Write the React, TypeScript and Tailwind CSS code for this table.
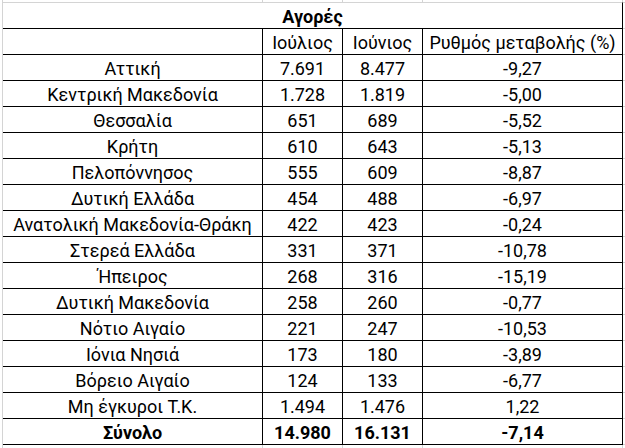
import React from "react";

const rows: [string, string, string, string][] = [
  ["Αττική", "7.691", "8.477", "-9,27"],
  ["Κεντρική Μακεδονία", "1.728", "1.819", "-5,00"],
  ["Θεσσαλία", "651", "689", "-5,52"],
  ["Κρήτη", "610", "643", "-5,13"],
  ["Πελοπόννησος", "555", "609", "-8,87"],
  ["Δυτική Ελλάδα", "454", "488", "-6,97"],
  ["Ανατολική Μακεδονία-Θράκη", "422", "423", "-0,24"],
  ["Στερεά Ελλάδα", "331", "371", "-10,78"],
  ["Ήπειρος", "268", "316", "-15,19"],
  ["Δυτική Μακεδονία", "258", "260", "-0,77"],
  ["Νότιο Αιγαίο", "221", "247", "-10,53"],
  ["Ιόνια Νησιά", "173", "180", "-3,89"],
  ["Βόρειο Αιγαίο", "124", "133", "-6,77"],
  ["Μη έγκυροι Τ.Κ.", "1.494", "1.476", "1,22"],
];

function Cell({ w, children, bold }: { w: string; children?: React.ReactNode; bold?: boolean }) {
  return (
    <div
      className={`${w} h-[26px] border-r border-b border-black flex items-start justify-center pt-[3px] leading-[22px] whitespace-nowrap ${bold ? "font-bold" : ""}`}
    >
      {children}
    </div>
  );
}

function Row({ cells, bold }: { cells: string[]; bold?: boolean }) {
  return (
    <div className="flex">
      <div className="w-[2px] h-[26px]" />
      <div className="w-[1px] h-[26px] bg-[#d4d4d4]" />
      <Cell w="w-[260px]" bold={bold}>{cells[0]}</Cell>
      <Cell w="w-[80px]" bold={bold}>{cells[1]}</Cell>
      <Cell w="w-[80px]" bold={bold}>{cells[2]}</Cell>
      <Cell w="w-[200px]" bold={bold}>{cells[3]}</Cell>
      <div className="w-[2px] h-[26px] border-b border-[#d4d4d4]" />
    </div>
  );
}

function Stubs({ h }: { h: string }) {
  return (
    <div className={`flex ${h}`}>
      <div className="w-[2px]" />
      <div className="w-[1px] bg-[#d4d4d4]" />
      <div className="w-[259px]" />
      <div className="w-[1px] bg-[#d4d4d4]" />
      <div className="w-[79px]" />
      <div className="w-[1px] bg-[#d4d4d4]" />
      <div className="w-[79px]" />
      <div className="w-[1px] bg-[#d4d4d4]" />
      <div className="w-[199px]" />
      <div className="w-[1px] bg-[#d4d4d4]" />
    </div>
  );
}

export default function App() {
  return (
    <div
      className="w-[625px] h-[448px] bg-white overflow-hidden text-black text-[18px]"
      style={{ fontFamily: "Roboto, 'Noto Sans', sans-serif" }}
    >
      <Stubs h="h-[2px]" />
      <div className="flex">
        <div className="w-[2px] h-[27px]" />
        <div className="w-[1px] h-[27px] bg-[#d4d4d4]" />
        <div className="w-[620px] h-[27px] border-t border-t-[#d4d4d4] border-r border-b border-r-black border-b-black flex items-start justify-center pt-[3px] leading-[22px] font-bold">
          Αγορές
        </div>
        <div className="w-[2px] h-[27px] border-t border-b border-[#d4d4d4]" />
      </div>
      <Row cells={["", "Ιούλιος", "Ιούνιος", "Ρυθμός μεταβολής (%)"]} />
      {rows.map((r) => (
        <Row key={r[0]} cells={r} />
      ))}
      <Row cells={["Σύνολο", "14.980", "16.131", "-7,14"]} bold />
      <Stubs h="h-[4px]" />
    </div>
  );
}
